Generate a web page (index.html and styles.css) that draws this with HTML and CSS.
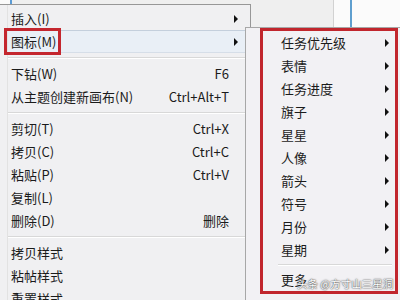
FILE: index.html
```html
<!DOCTYPE html>
<html lang="zh-CN">
<head>
  <meta charset="UTF-8">
  <title>右键菜单</title>
  <link rel="stylesheet" href="styles.css">
</head>
<body>

  <div class="screen">
    <div class="menu main">
      <div class="list">
        <div class="item"><span class="label">插入(I)</span><span class="arrow"></span></div>
        <div class="item hover"><span class="label marked">图标(M)</span><span class="arrow"></span></div>
        <div class="sep"></div>
        <div class="item"><span class="label">下钻(W)</span><span class="key">F6</span></div>
        <div class="item"><span class="label">从主题创建新画布(N)</span><span class="key">Ctrl+Alt+T</span></div>
        <div class="sep"></div>
        <div class="item"><span class="label">剪切(T)</span><span class="key">Ctrl+X</span></div>
        <div class="item"><span class="label">拷贝(C)</span><span class="key">Ctrl+C</span></div>
        <div class="item"><span class="label">粘贴(P)</span><span class="key">Ctrl+V</span></div>
        <div class="item"><span class="label">复制(L)</span></div>
        <div class="item"><span class="label">删除(D)</span><span class="key">删除</span></div>
        <div class="sep"></div>
        <div class="item"><span class="label">拷贝样式</span></div>
        <div class="item"><span class="label">粘帖样式</span></div>
        <div class="item"><span class="label">重置样式</span></div>
      </div>
    </div>

    <div class="menu sub">
      <div class="frame">
        <div class="item"><span class="label">任务优先级</span><span class="arrow"></span></div>
        <div class="item"><span class="label">表情</span><span class="arrow"></span></div>
        <div class="item"><span class="label">任务进度</span><span class="arrow"></span></div>
        <div class="item"><span class="label">旗子</span><span class="arrow"></span></div>
        <div class="item"><span class="label">星星</span><span class="arrow"></span></div>
        <div class="item"><span class="label">人像</span><span class="arrow"></span></div>
        <div class="item"><span class="label">箭头</span><span class="arrow"></span></div>
        <div class="item"><span class="label">符号</span><span class="arrow"></span></div>
        <div class="item"><span class="label">月份</span><span class="arrow"></span></div>
        <div class="item"><span class="label">星期</span><span class="arrow"></span></div>
        <div class="sep"></div>
        <div class="item"><span class="label">更多</span></div>
      </div>
    </div>

    <div class="watermark">头条 @方寸山三星洞</div>
  </div>

</body>
</html>
```

FILE: styles.css
```css
body {
  margin: 0;
  font-family: "Noto Sans CJK SC", "Noto Sans", sans-serif;
  font-size: 13px;
  color: #1b1b1b;
}

.screen {
  position: relative;
  width: 400px;
  height: 300px;
  overflow: hidden;
  display: flex;
  align-items: flex-start;
  background: linear-gradient(to right, #fafafa 0 10px, #5b9bd5 10px 12px, #efefef 12px 333px,
    #d2d2d2 333px 334px, #fbfbfb 334px 350px, #5f9fcf 350px 352px, #fbfbfb 352px);
}

.menu {
  background-color: #f0f0f2;
  flex-shrink: 0;
}

.main {
  width: 250px;
  height: 300px;
  margin-top: 4px;
  border-top: 1px solid #979797;
  border-right: 1px solid #979797;
}

.main .list {
  margin-left: 7px;
  padding-top: 2px;
  border-left: 1px solid #e2e2e2;
  height: 100%;
}

.item {
  height: 23px;
  display: flex;
  align-items: center;
  padding: 0 12px 0 3px;
  line-height: 17px;
  white-space: nowrap;
}

.key {
  margin-left: auto;
  margin-right: 9px;
}

.arrow {
  margin-left: auto;
  width: 0;
  height: 0;
  border-top: 4px solid transparent;
  border-bottom: 4px solid transparent;
  border-left: 4px solid #111;
}

.hover {
  background-color: #e9eff6;
  box-shadow: inset 0 1px 0 #c4cfdc, inset 0 -1px 0 #d6dee8;
}

.marked {
  display: inline-block;
  padding: 2px 2px 2px 4px;
  margin: -5px -5px -5px -7px;
  border: 3px solid #c4262e;
}

.sep {
  height: 9px;
  display: flex;
  align-items: center;
}

.sep::before {
  content: "";
  flex: 1;
  height: 1px;
  background-color: #d8d8d8;
  box-shadow: 0 1px 0 #ffffff;
}

.sub {
  width: 154px;
  height: 300px;
  margin-top: 27px;
  margin-left: -6px;
  background-color: #f2f1f4;
  border-top: 1px solid #a7a7a7;
  border-left: 1px solid #a7a7a7;
}

.frame {
  margin: 0 2px 0 14px;
  border: 3px solid #c1262d;
  padding-left: 18px;
}

.frame .item {
  padding: 0 6px 0 0;
}

.frame .sep {
  height: 7px;
  margin-left: -3px;
  margin-right: 3px;
}

.watermark {
  position: absolute;
  left: 297px;
  top: 276px;
  color: #ffffff;
  font-size: 10.5px;
  white-space: nowrap;
  text-shadow: 0 0 2px #444, 0 0 1px #444;
}
```
